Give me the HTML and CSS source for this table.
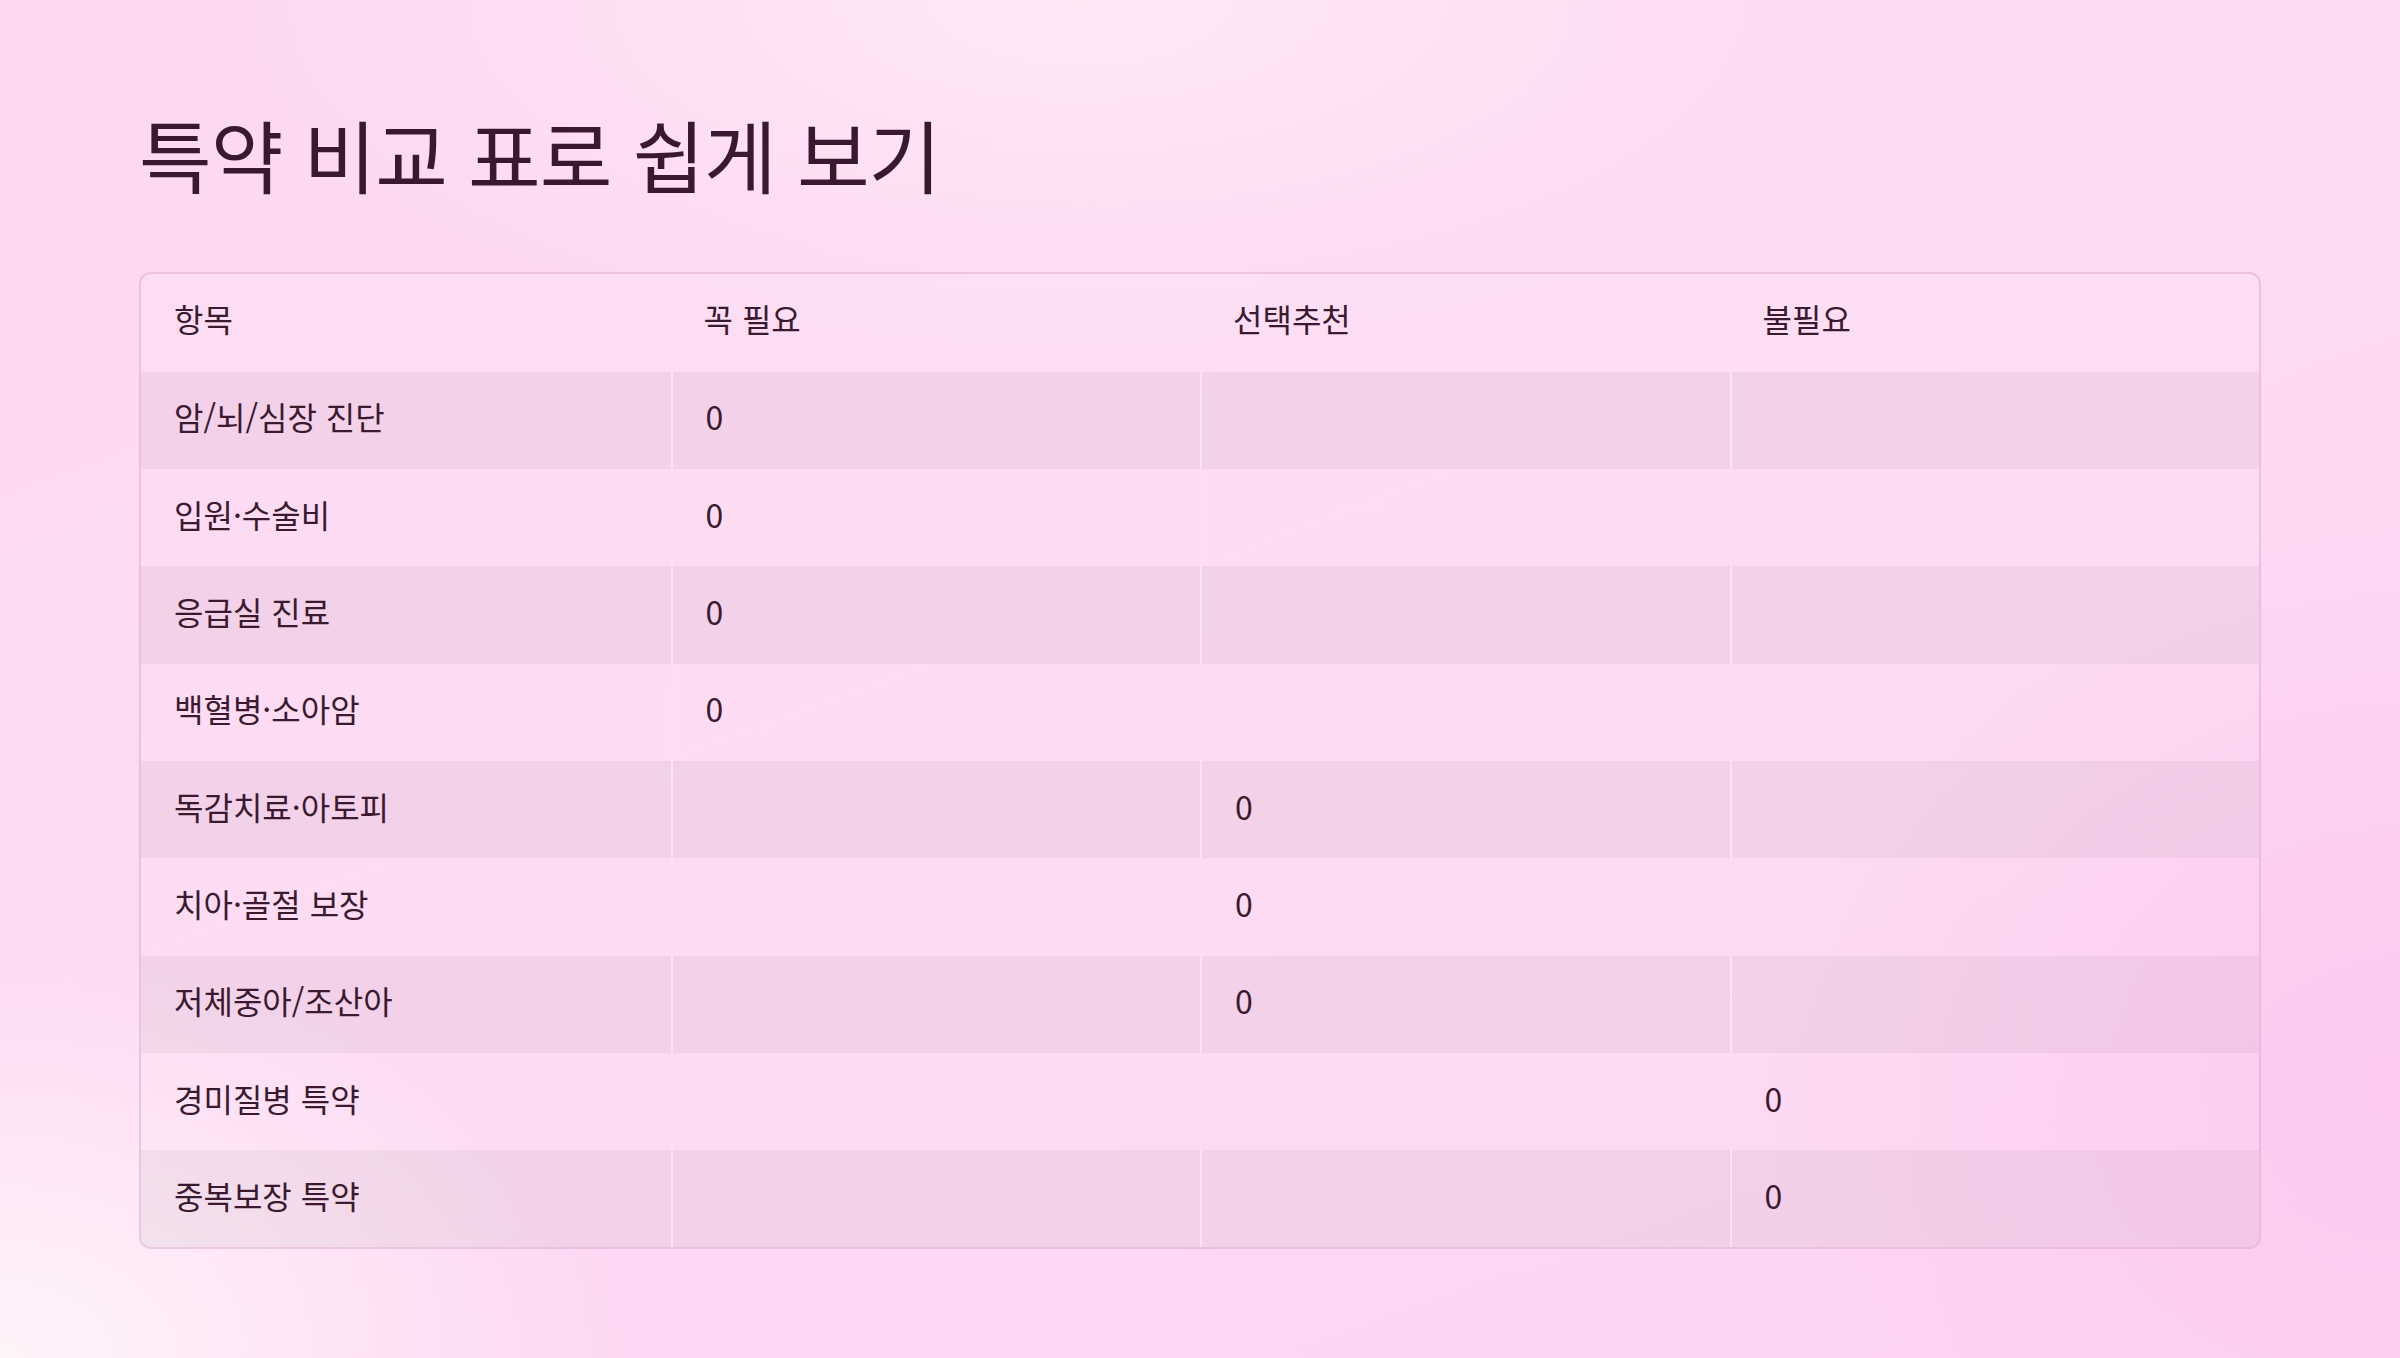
FILE: index.html
```html
<!DOCTYPE html>
<html lang="ko">
<head>
<meta charset="utf-8">
<title>특약 비교 표로 쉽게 보기</title>
<link rel="stylesheet" href="styles.css">
</head>
<body>
<main class="page">
  <h1 class="title">특약 비교 표로 쉽게 보기</h1>
  <table class="compare">
    <thead>
      <tr><th>항목</th><th>꼭 필요</th><th>선택추천</th><th>불필요</th></tr>
    </thead>
    <tbody>
      <tr><td>암/뇌/심장 진단</td><td>0</td><td></td><td></td></tr>
      <tr><td>입원·수술비</td><td>0</td><td></td><td></td></tr>
      <tr><td>응급실 진료</td><td>0</td><td></td><td></td></tr>
      <tr><td>백혈병·소아암</td><td>0</td><td></td><td></td></tr>
      <tr><td>독감치료·아토피</td><td></td><td>0</td><td></td></tr>
      <tr><td>치아·골절 보장</td><td></td><td>0</td><td></td></tr>
      <tr><td>저체중아/조산아</td><td></td><td>0</td><td></td></tr>
      <tr><td>경미질병 특약</td><td></td><td></td><td>0</td></tr>
      <tr><td>중복보장 특약</td><td></td><td></td><td>0</td></tr>
    </tbody>
  </table>
</main>
</body>
</html>
```

FILE: styles.css
```css
html, body {
  margin: 0;
  padding: 0;
}
body {
  width: 2400px;
  height: 1358px;
  overflow: hidden;
  font-family: "Noto Sans CJK KR", "Noto Sans", sans-serif;
  color: #3b1a30;
  background:
    radial-gradient(ellipse 900px 600px at 0% 100%, #fff4fa 0%, rgba(255,244,250,0) 70%),
    radial-gradient(ellipse 1200px 500px at 45% 0%, #ffe9f7 0%, rgba(255,233,247,0) 70%),
    radial-gradient(ellipse 900px 800px at 100% 80%, #fdc9ef 0%, rgba(253,201,239,0) 70%),
    linear-gradient(160deg, #fdd8f2 0%, #fddaf4 45%, #fdd4f2 100%);
}
.page {
  padding: 107px 139px 0 139px;
}
.title {
  margin: 0 0 70px 0;
  font-size: 79px;
  font-weight: 400;
  line-height: 1.2;
  letter-spacing: -1px;
  color: #3a1830;
}
.compare {
  width: 2122px;
  border-collapse: separate;
  border-spacing: 0;
  table-layout: fixed;
  border: 2px solid rgba(215, 160, 200, 0.45);
  border-radius: 12px;
  overflow: hidden;
  background: rgba(255, 255, 255, 0.05);
}
.compare th,
.compare td {
  width: 25%;
  height: 97.3px;
  padding: 0 0 8px 33px;
  text-align: left;
  vertical-align: middle;
  font-size: 32px;
  font-weight: 400;
  line-height: 1;
  box-sizing: border-box;
}
.compare th {
  height: 98px;
  padding-bottom: 10px;
  background: rgba(255, 255, 255, 0.1);
}
.compare td + td {
  border-left: 2px solid rgba(255, 240, 250, 0.6);
}
.compare tbody tr:nth-child(odd) td {
  background: rgba(118, 112, 110, 0.08);
}
.compare tbody tr:nth-child(even) td {
  background: rgba(255, 255, 255, 0.03);
}
.compare tbody tr:nth-child(even) td + td {
  border-left-color: rgba(255, 240, 250, 0.15);
}
```
